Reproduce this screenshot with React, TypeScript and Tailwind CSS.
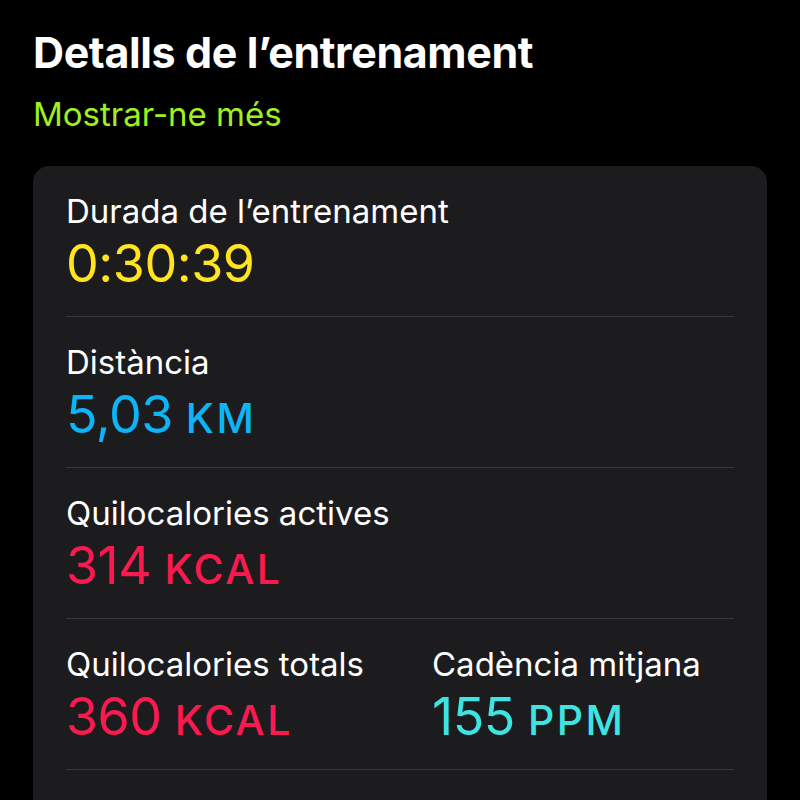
const rows: {
  label: string
  value: string
  unit?: string
  color: string
}[][] = [
  [{ label: 'Durada de l’entrenament', value: '0:30:39', color: 'text-[#ffe41f]' }],
  [{ label: 'Distància', value: '5,03', unit: 'KM', color: 'text-[#0bb5f7]' }],
  [{ label: 'Quilocalories actives', value: '314', unit: 'KCAL', color: 'text-[#fa1a50]' }],
  [
    { label: 'Quilocalories totals', value: '360', unit: 'KCAL', color: 'text-[#fa1a50]' },
    { label: 'Cadència mitjana', value: '155', unit: 'PPM', color: 'text-[#3ee4e2]' },
  ],
]

export default function App() {
  return (
    <div
      className="min-h-screen bg-black text-white overflow-hidden"
      style={{ fontFamily: 'Inter, "Noto Sans", sans-serif' }}
    >
      <div className="h-[800px] overflow-hidden px-[33px] pt-[26px]">
        <h1 className="text-[43px] leading-[52px] font-bold tracking-[-0.4px]">
          Detalls de l’entrenament
        </h1>
        <p className="mt-[16px] text-[33px] leading-[40px] text-[#a0f01c]">Mostrar-ne més</p>

        <div className="mt-[32px] rounded-[16px] bg-[#1c1c1e] px-[33px] pb-[200px]">
          {rows.map((row, i) => (
            <div key={i} className="flex border-b border-[#38383a] h-[151px] pt-[25px]">
              {row.map((item, j) => (
                <div
                  key={item.label}
                  className={
                    j === 0
                      ? 'w-[366px] shrink-0 flex flex-col whitespace-nowrap'
                      : 'flex-1 flex flex-col whitespace-nowrap'
                  }
                >
                  <span className="text-[33px] leading-[40px] text-white">{item.label}</span>
                  <span className={`${item.color} mt-[3px] text-[52px] leading-[60px] tracking-[-0.5px]`}>
                    {item.value}
                    {item.unit && (
                      <span className="ml-[13px] text-[41px] font-medium tracking-[2.5px]">
                        {item.unit}
                      </span>
                    )}
                  </span>
                </div>
              ))}
            </div>
          ))}
        </div>
      </div>
    </div>
  )
}
